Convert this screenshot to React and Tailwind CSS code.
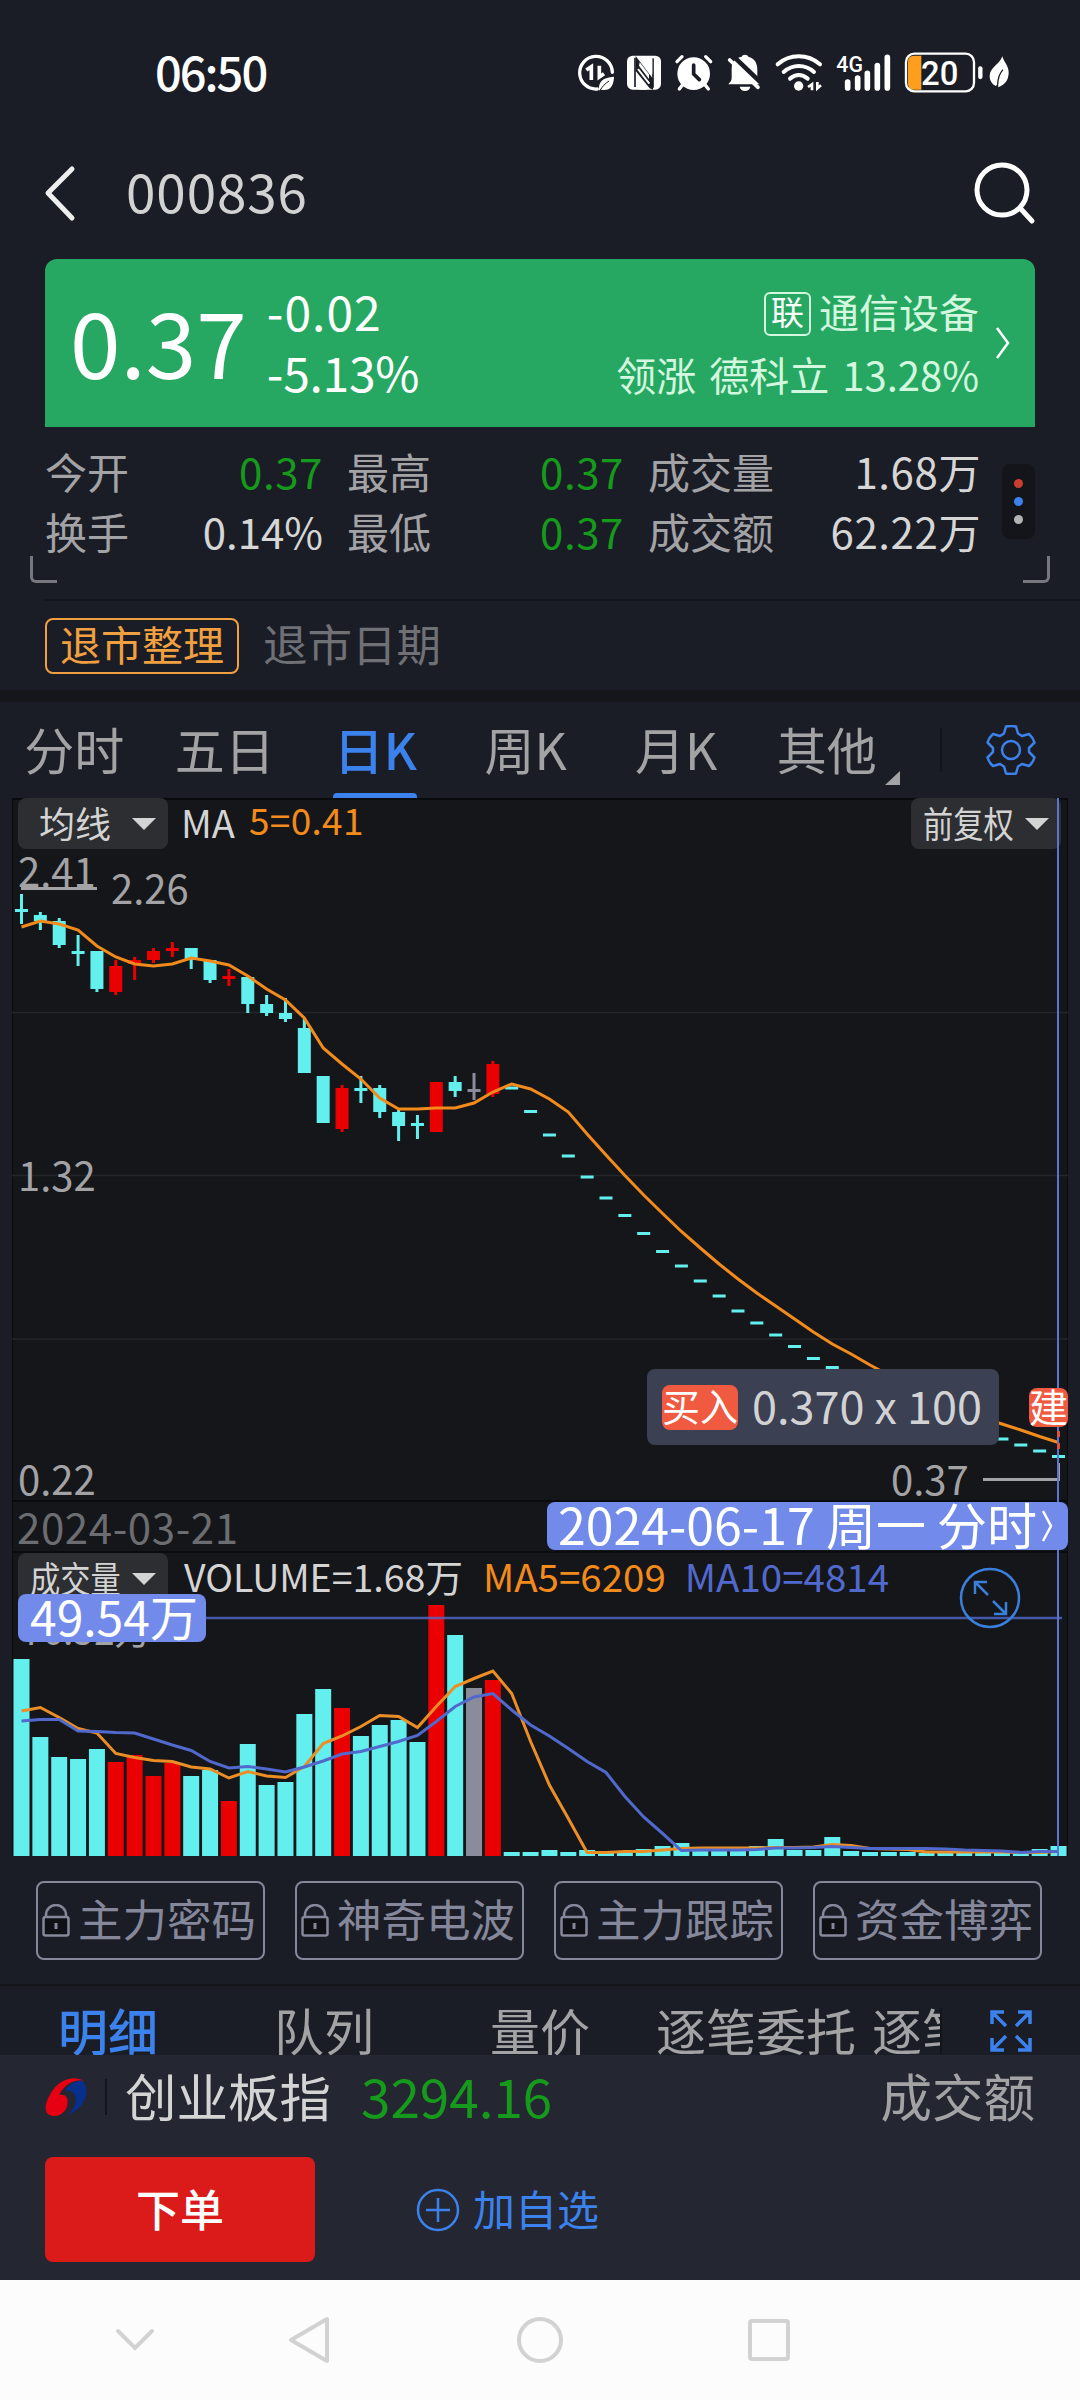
import React, { useState } from 'react';
import clsx from 'clsx';

const UP = '#ea0000';
const DOWN = '#63efee';
const FLAT = '#8a8c9b';

// horizontal geometry shared by both charts
const STEP = 18.855;
const X0 = 9.5;
const cx = (i) => X0 + i * STEP;

// [high, bodyTop, bodyBottom, low, color]
const candles = [
  [96, 111, 114, 126, DOWN], [114, 117, 123, 132, DOWN], [120, 123, 147, 150, DOWN],
  [137, 153, 156, 168, DOWN], [153, 153, 191, 194, DOWN], [162, 168, 194, 197, UP],
  [159, 162, 166, 182, UP], [150, 153, 162, 165, UP], [144, 150, 153, 159, UP],
  [150, 150, 162, 171, DOWN], [162, 162, 182, 185, DOWN], [171, 178, 181, 188, UP],
  [179, 179, 206, 215, DOWN], [197, 206, 215, 218, DOWN], [200, 215, 221, 224, DOWN],
  [221, 230, 275, 275, DOWN], [278, 278, 325, 325, DOWN], [287, 290, 331, 334, UP],
  [278, 290, 293, 305, DOWN], [287, 290, 314, 320, DOWN], [311, 314, 328, 343, DOWN],
  [317, 325, 328, 341, DOWN], [284, 284, 334, 334, UP], [278, 284, 293, 299, DOWN],
  [275, 291, 294, 302, FLAT], [263, 266, 296, 299, UP],
];

// limit-down days, one price per day
const limitDown = [
  290, 313.5, 337, 358, 379, 400, 417.5, 435.5, 453.5, 468, 483, 498, 513, 525, 537,
  548.5, 560.5, 569.5, 578, 587, 595, 602, 609, 616, 623, 630, 641, 647, 653, 658.5,
];

const ma5 = [
  129, 123, 126, 132, 148, 159, 166, 168, 166, 160, 163, 167, 178, 191, 202, 220, 250, 266,
  281, 300, 311, 311, 310, 310, 305, 294, 286, 291, 301, 314, 336, 357, 377.5, 397, 415.5,
  433.5, 450, 466, 481, 495, 508, 521, 534, 546, 556, 567, 577, 587, 597, 606, 614, 620,
  626, 632, 638.5, 644.5,
];

const volumes = [
  [197, DOWN], [119, DOWN], [99, DOWN], [97, DOWN], [107, DOWN], [94, UP], [101, UP],
  [80, UP], [93, UP], [80, DOWN], [86, DOWN], [55, UP], [112, DOWN], [71, DOWN], [74, DOWN],
  [142, DOWN], [167, DOWN], [148, UP], [120, DOWN], [131, DOWN], [136, DOWN], [114, DOWN],
  [251, UP], [221, DOWN], [168, FLAT], [176, UP], [4, DOWN], [4, DOWN], [6, DOWN], [4, DOWN],
  [6, DOWN], [5, DOWN], [5, DOWN], [7, DOWN], [10, DOWN], [13, DOWN], [6, DOWN], [6, DOWN],
  [6, DOWN], [10, DOWN], [17, DOWN], [6, DOWN], [6, DOWN], [19, DOWN], [5, DOWN], [4, DOWN],
  [4, DOWN], [4, DOWN], [3, DOWN], [3, DOWN], [3, DOWN], [3, DOWN], [3, DOWN], [3, DOWN],
  [7, DOWN], [10, DOWN],
];

const volMa5 = [
  158.5, 155, 165, 176, 180.5, 201, 205, 208, 209, 214.5, 216.5, 225.5, 219, 223.5, 225,
  214, 191, 183.5, 174, 163, 164, 175, 154, 134, 126, 118.5, 141, 189, 232.5, 266, 300, 300,
  299, 299, 297.5, 296, 295.5, 295.5, 295.5, 295.5, 295, 295, 294.5, 292, 293, 296, 296.5,
  297, 299.5, 299.5, 299.5, 299.5, 299.5, 300, 300, 299,
];

const volMa10 = [
  168.5, 167, 167, 178.5, 179, 180, 180.5, 186.5, 192.5, 198, 209, 215.5, 214, 216.5, 219.5,
  214.5, 208.5, 201.5, 199, 194, 189, 183, 169, 154, 144.5, 141, 157.5, 172.5, 183.5, 196,
  209, 220, 244, 264.5, 281, 298, 297.5, 297.5, 297.5, 297, 295.5, 295.5, 295, 294, 295,
  296, 296, 296, 296, 296.5, 297.5, 298, 298.5, 300, 299, 299,
];

const toPoints = (values) => values.map((y, i) => `${cx(i).toFixed(1)},${y}`).join(' ');

function StatusBar() {
  return (
    <div className="flex h-[146px] items-center justify-between pl-[155px] pr-[70px] text-white">
      <span className="-mt-1.5 text-[47px] leading-none font-medium tracking-[-2px]">06:50</span>
      <div className="flex items-center">
        {/* data saver */}
        <svg className="h-10 w-[38px]" viewBox="113 70 114 120" fill="none" stroke="white">
          <path d="M219 128a49 49 0 1 0-45 50" strokeWidth="10" strokeLinecap="round" />
          <path d="M141 121l15-10v40" strokeWidth="11" />
          <path d="M180 108v34l14-10" strokeWidth="11" />
          <path d="M179 183c-3-28 12-40 45-42-1 30-14 44-38 39z" fill="white" stroke="none" />
          <path d="M181 184c8-14 16-22 28-30" stroke="#1b1d26" strokeWidth="3" />
        </svg>
        {/* nfc */}
        <svg className="ml-[11px] h-10 w-[36px]" viewBox="264 70 108 120">
          <rect x="267" y="78" width="102" height="102" rx="17" fill="white" />
          <path d="M291 84v88M345 86v88" stroke="#1b1d26" strokeWidth="5" />
          <path d="M293 79l52 68v33l-10-4-42-52z" fill="#1b1d26" />
          <path d="M299 80l32 0v36zM303 108l30 40v-14l-28-36zM303 142v38h24z" fill="white" />
          <path d="M300 118l34 44M340 82v50" stroke="white" strokeWidth="6" />
        </svg>
        {/* alarm */}
        <svg className="ml-[12px] h-10 w-[40px]" viewBox="410 70 120 120" fill="none" stroke="white" strokeLinecap="round">
          <circle cx="469" cy="132" r="49" fill="white" stroke="none" />
          <path d="M419 96l15-15M520 96l-15-15" strokeWidth="10" />
          <path d="M436 165l-10 13M503 165l10 13" strokeWidth="10" />
          <path d="M469 106v27l17 17" stroke="#1b1d26" strokeWidth="11" />
        </svg>
        {/* muted bell */}
        <svg className="ml-[12px] h-10 w-[36px]" viewBox="566 70 108 120">
          <path d="M583 117c0-24 14-33 30-36 2-8 18-8 20 0 18 5 27 18 27 40v25l8 18h-95c5-6 10-10 10-18z" fill="white" />
          <path d="M607 171h32c-2 17-30 17-32 0z" fill="white" />
          <path d="M583 75l90 86" stroke="#1b1d26" strokeWidth="14" />
          <path d="M577 91l85 82" stroke="white" strokeWidth="11" strokeLinecap="round" />
        </svg>
        {/* wifi */}
        <svg className="ml-[12px] h-10 w-[50px]" viewBox="707 70 150 120" fill="none" stroke="white" strokeLinecap="round">
          <path d="M718 104c36-32 90-32 127 0M736 127c27-24 64-24 91 0M755 147c17-14 36-14 53 0" strokeWidth="12" />
          <circle cx="781" cy="169" r="14" fill="white" stroke="none" />
          <path d="M809 172l12-8v18M837 157v19l11-9" strokeWidth="8" strokeLinecap="butt" />
        </svg>
        {/* signal */}
        <svg className="ml-[12px] h-10 w-[56px] overflow-visible" viewBox="892 70 168 120">
          <text x="893" y="128" fontSize="68" fontWeight="500" fill="white" textLength="80" lengthAdjust="spacingAndGlyphs" style={{ fontFamily: 'Roboto' }}>4G</text>
          <path d="M927 157v18M957 145v30M986 131v44M1016 108v67M1046 83v92" stroke="white" strokeWidth="17" strokeLinecap="round" />
        </svg>
        {/* battery */}
        <svg className="ml-[12px] h-10 w-[80px] overflow-visible" viewBox="1095 70 240 120">
          <path d="M1147 78h-22q-18 0-18 18v66q0 18 18 18h22z" fill="#ff9d1c" />
          <rect x="1101" y="72" width="204" height="113" rx="25" fill="none" stroke="white" strokeWidth="7" />
          <path d="M1324 116v26" stroke="white" strokeWidth="13" strokeLinecap="round" />
          <text x="1146" y="165" fontSize="102" fontWeight="500" fill="white" textLength="112" lengthAdjust="spacingAndGlyphs" style={{ fontFamily: 'Roboto' }}>20</text>
        </svg>
        <svg className="ml-[4px] h-10 w-[22px]" viewBox="1347 70 66 120">
          <path d="M1390 80c4 16 19 28 19 48 0 24-12 38-31 45l-1-13-6 9c-12-5-19-16-19-30 0-26 29-33 38-59z" fill="white" />
          <path d="M1376 164c1-22 5-32 16-44" stroke="#1b1d26" strokeWidth="4" fill="none" />
        </svg>
      </div>
    </div>
  );
}

function Header() {
  return (
    <div className="flex h-[113px] items-start justify-between pl-[43px] pr-[43px] pt-[16px]">
      <div className="flex items-center">
        <svg className="h-[60px] w-[36px]" viewBox="0 0 36 60" fill="none" stroke="#eeeeee" strokeWidth="5" strokeLinecap="round" strokeLinejoin="round">
          <path d="M29 7L5 31l24 25" />
        </svg>
        <span className="ml-[47px] pb-[3px] text-[53px] leading-none tracking-[0.9px] text-[#d2d2d2]">000836</span>
      </div>
      <svg className="h-[64px] w-[66px]" viewBox="0 0 66 64" fill="none" stroke="white" strokeWidth="5" strokeLinecap="round">
        <circle cx="31" cy="28" r="25" />
        <path d="M49 46l12 13" />
      </svg>
    </div>
  );
}

function QuoteCard() {
  return (
    <div className="mx-[45px] flex h-[168px] items-center rounded-t-xl bg-[#27a862] pl-[25px] pr-[23px] text-white">
      <span className="pb-[8px] text-[91px] leading-none">0.37</span>
      <div className="ml-[20px] flex flex-col gap-[13px] pb-[6px] text-[48px] leading-none">
        <span className="tracking-[1px]">-0.02</span>
        <span className="tracking-[-0.3px]">-5.13%</span>
      </div>
      <div className="ml-auto flex flex-col items-end gap-[18px] pb-[6px] text-[40px] leading-none text-[#d3f7df]">
        <div className="flex items-center">
          <span className="mr-[8px] mt-[5px] flex h-[44px] w-[47px] items-center justify-center rounded-md border-2 border-[#d3f7df] pb-1 text-[33px] text-white">联</span>
          <span>通信设备</span>
        </div>
        <span className="whitespace-pre [word-spacing:4px]">领涨 德科立 13.28%</span>
      </div>
      <svg className="ml-[15px] h-[34px] w-[18px]" viewBox="0 0 18 34" fill="none" stroke="white" strokeWidth="2.5">
        <path d="M3 2l11 15L3 32" />
      </svg>
    </div>
  );
}

const stats = [
  { label: '今开', value: '0.37', green: true },
  { label: '最高', value: '0.37', green: true },
  { label: '成交量', value: '1.68万' },
  { label: '换手', value: '0.14%' },
  { label: '最低', value: '0.37', green: true },
  { label: '成交额', value: '62.22万' },
];

function Stats() {
  return (
    <div className="relative h-[172px] pl-[45px] pr-[45px] pt-[14px]">
      <div className="flex">
        <div className="grid w-[937px] grid-cols-[278px_277px_333px] gap-x-[24px] text-[42px] leading-[60px]">
          {stats.map((s) => (
            <div key={s.label} className="flex justify-between">
              <span className="text-[#a3a3a6]">{s.label}</span>
              <span className={clsx(s.green ? 'tracking-[0.6px] text-[#159a1b]' : 'text-[#d6d6d6]', s.value.endsWith('万') && 'tracking-[0.6px]')}>
                {s.value}
              </span>
            </div>
          ))}
        </div>
        <div className="ml-[20px] mt-[23px] flex h-[75px] w-[33px] flex-col items-center justify-center gap-[9px] rounded-lg bg-[#14151a]">
          <span className="size-[9px] rounded-full bg-[#c9402f]" />
          <span className="size-[9px] rounded-full bg-[#3b82ec]" />
          <span className="size-[9px] rounded-full bg-[#b3b3b3]" />
        </div>
      </div>
      <span className="absolute left-[30px] top-[129px] h-[27px] w-[27px] rounded-bl-md border-b-3 border-l-3 border-[#77787d]" />
      <span className="absolute right-[30px] top-[129px] h-[27px] w-[27px] rounded-br-md border-b-3 border-r-3 border-[#77787d]" />
    </div>
  );
}

const periods = ['分时', '五日', '日K', '周K', '月K', '其他'];

function PeriodTabs() {
  const [active, setActive] = useState('日K');
  return (
    <div className="flex h-24 items-center">
      {periods.map((p) => (
        <button
          key={p}
          onClick={() => setActive(p)}
          className={clsx(
            'relative flex h-full w-[150.5px] items-center justify-center pr-[2px] pb-[5px] text-[50px] leading-none',
            p === active ? 'font-medium text-[#3b82ec]' : 'text-[#a3a3a6]'
          )}
        >
          {p}
          {p === active && <span className="absolute bottom-0 left-[32px] h-[5px] w-[84px] rounded-t bg-[#3b82ec]" />}
          {p === '其他' && (
            <svg className="absolute bottom-[13px] right-[3px] h-[14px] w-[15px]" viewBox="0 0 15 14">
              <path d="M15 0v14H0z" fill="#a3a3a6" />
            </svg>
          )}
        </button>
      ))}
      <span className="ml-[37px] h-[44px] w-[2px] bg-[#14151a]" />
      <svg className="ml-[44px] h-[50px] w-[50px]" viewBox="-25 -25 50 50" fill="none" stroke="#3b82ec" strokeWidth="2.5" strokeLinejoin="round">
        <path d="M-5-23.500Q0-24.500 5-23.500L7-16.500L11-14L18-16Q22-12.500 23.500-7.500L18-2V2L23.500 7.500Q22 12.500 18 16L11 14L7 16.500L5 23.500Q0 24.500-5 23.500L-7 16.500L-11 14L-18 16Q-22 12.500-23.500 7.500L-18 2V-2L-23.500-7.500Q-22-12.500-18-16L-11-14L-7-16.500Z" />
        <circle r="9" />
      </svg>
    </div>
  );
}

function Picker({ children, narrow }) {
  return (
    <div className="flex h-[51px] w-[150px] items-center justify-between rounded-lg bg-[#2d2e32] pr-[12px] text-[36px] leading-none text-[#d4d4d4]">
      <span className={clsx('origin-left pb-1 whitespace-nowrap', narrow ? 'ml-[12px] w-[90px] scale-x-[0.84]' : 'ml-[21px]')}>
        {children}
      </span>
      <svg className="h-3 w-6" viewBox="0 0 24 12">
        <path d="M0 0h24L12 12z" fill="#d4d4d4" />
      </svg>
    </div>
  );
}

function PriceChart() {
  return (
    <div className="relative h-[704px] border-y-2 border-[#0a0b0e]">
      <svg className="absolute -top-[2px] left-0 h-[704px] w-[1056px] overflow-visible" viewBox="0 0 1056 704">
        <path d="M0 214.500h1056M0 377.500h1056M0 541h1056" stroke="#23252a" strokeWidth="1.500" />
        {candles.map(([high, top, bottom, low, color], i) => (
          <g key={i} fill={color}>
            <rect x={cx(i) - 1.5} y={high} width="3" height={low - high} />
            <rect x={cx(i) - 6.5} y={top} width="13" height={bottom - top} />
          </g>
        ))}
        {limitDown.map((y, i) => (
          <rect key={i} x={cx(i + 26) - 6.5} y={y - 1.5} width="13" height="3" fill={DOWN} />
        ))}
        <polyline points={toPoints(ma5)} fill="none" stroke="#f28a1c" strokeWidth="3" />
        <g fill="#a3a3a6" fontSize="40">
          <text x="6" y="89">2.41</text>
          <text x="99" y="106">2.26</text>
          <text x="6" y="393">1.32</text>
          <text x="6" y="697">0.22</text>
          <text x="879" y="697">0.37</text>
          <rect x="9" y="89" width="76" height="3" />
          <rect x="971" y="680" width="75" height="3" />
          <rect x="1045" y="665" width="3" height="18" />
        </g>
      </svg>
      <div className="relative -mt-[2px] flex items-center pl-[6px] pr-[7px]">
        <Picker>均线</Picker>
        <span className="ml-[13px] pb-1 text-[38px] leading-none text-[#d4d4d4]">MA</span>
        <span className="ml-[14px] pb-2 text-[37px] leading-none tracking-[0.3px] text-[#f28a1c]">5=0.41</span>
        <div className="ml-auto">
          <Picker narrow>前复权</Picker>
        </div>
      </div>
    </div>
  );
}

function TradeTip() {
  return (
    <>
      <div className="absolute left-[635px] top-[571px] flex h-[76px] w-[352px] items-center rounded-lg bg-[#3b4053] pl-[15px]">
        <span className="flex h-[45px] w-[76px] items-center justify-center rounded-lg bg-[#ef5a41] pb-1 text-[38px] leading-none whitespace-nowrap text-white">买入</span>
        <span className="ml-[14px] pb-1.5 text-[45px] leading-none whitespace-nowrap text-[#d2d2d4]">0.370 x 100</span>
      </div>
      <svg className="absolute left-[1045px] top-[629px] h-[28px] w-[3px]" viewBox="0 0 3 28">
        <path d="M1.500 4v24" stroke="#e0503f" strokeWidth="3" strokeDasharray="6 6" />
      </svg>
      <span className="absolute left-[1017px] top-[590px] flex h-[39px] w-[39px] items-center justify-center rounded-lg bg-[#ef5a41] pb-1 text-[39px] leading-none text-white">建</span>
    </>
  );
}

function DateStrip() {
  return (
    <div className="flex h-[51px] items-start justify-between border-b-2 border-[#0a0b0e] text-[#6c6d71]">
      <span className="ml-[5px] mt-[3px] text-[42px] leading-[42px] tracking-[0.6px]">2024-03-21</span>
      <div className="relative z-10 flex h-[48px] w-[521px] items-center rounded-lg bg-[#728bea] pl-[11px] text-white">
        <span className="pb-1.5 text-[50px] leading-none whitespace-pre">2024-06-17 周一 分时</span>
        <svg className="ml-[4px] h-[34px] w-[14px] shrink-0" viewBox="0 0 14 34" fill="none" stroke="white" strokeWidth="2.5">
          <path d="M2 2l8 15-8 15" />
        </svg>
      </div>
    </div>
  );
}

function VolumeChart() {
  return (
    <div className="relative h-[303px]">
      <svg className="absolute left-0 top-0 h-[303px] w-[1056px]" viewBox="0 0 1056 303">
        <text x="10" y="92" fontSize="37" fill="#a3a3a6">76.52万</text>
        {volumes.map(([h, color], i) => (
          <rect key={i} x={cx(i) - 8} y={303 - h} width="16" height={h} fill={color} />
        ))}
        <g transform="translate(0 -0.500)" fill="none" strokeWidth="3">
          <polyline points={toPoints(volMa5)} stroke="#ec8e26" />
          <polyline points={toPoints(volMa10)} stroke="#5169cc" />
        </g>
        <path d="M188 65h862" stroke="#5169cc" strokeOpacity="0.800" strokeWidth="2.500" />
        <g fill="none" stroke="#3b7fdc" strokeWidth="2.500">
          <circle cx="978" cy="45" r="29" />
          <path d="M976 42l-13-13M963 41V29h12M981 48l13 13M994 49v12h-12" />
        </g>
      </svg>
      <div className="relative flex items-center pl-[6px] text-[38px] leading-none">
        <Picker narrow>成交量</Picker>
        <span className="ml-[16px] pb-1.5 text-[37.5px] text-[#d4d4d4]">VOLUME=1.68万</span>
        <span className="ml-[20px] pb-1.5 text-[38.5px] text-[#f28a1c]">MA5=6209</span>
        <span className="ml-[19px] pb-1.5 text-[38.5px] text-[#5169cc]">MA10=4814</span>
      </div>
      <div className="absolute left-[6px] top-[41px] flex h-[48px] w-[188px] items-center rounded-lg bg-[#728bea] pb-1.5 pl-[12px] text-[48px] leading-none whitespace-nowrap text-white">49.54万</div>
    </div>
  );
}

function FeatureButtons() {
  return (
    <div className="flex h-[130px] gap-[30px] border-b-2 border-[#14151a] px-[36px] pt-[25px]">
      {['主力密码', '神奇电波', '主力跟踪', '资金博弈'].map((name) => (
        <button key={name} className="flex h-[79px] w-[229px] items-center rounded-lg border-2 border-[#85879a] pl-[4px] text-[44.5px] leading-none text-[#85879a]">
          <svg className="h-[33px] w-[28px] shrink-0" viewBox="0 0 28 33" fill="none" stroke="#85879a" strokeWidth="2.500">
            <path d="M4 13V11a10 10 0 0 1 20 0v2" />
            <rect x="1.500" y="13" width="25" height="18.500" rx="2" fill="#101116" />
            <path d="M14 19v6" strokeWidth="3" />
          </svg>
          <span className="ml-[8px] pb-1 whitespace-nowrap">{name}</span>
        </button>
      ))}
    </div>
  );
}

function DetailTabs() {
  return (
    <div className="flex h-[69px] overflow-hidden">
      <div className="flex w-[940px] overflow-hidden">
        {['明细', '队列', '量价', '逐笔委托', '逐笔成交'].map((name, i) => (
          <span key={name} className={clsx('w-[216px] shrink-0 pt-[18px] text-center text-[50px] leading-[50px] whitespace-nowrap', i === 0 ? 'font-medium text-[#3b82ec]' : 'text-[#a3a3a6]')}>
            {name}
          </span>
        ))}
      </div>
      <span className="mt-[22px] h-[46px] w-[2px] bg-[#14151a]" />
      <svg className="ml-[48px] mt-[24px] h-[42px] w-[42px]" viewBox="0 0 42 42" fill="none" stroke="#3b82ec" strokeWidth="3.500">
        <path d="M2 14V2h12M2 2l14 14M28 2h12v12M40 2L26 16M2 28v12h12M2 40l14-14M28 40h12V28M40 40L26 26" />
      </svg>
    </div>
  );
}

function BottomPanel() {
  return (
    <div className="h-[225px] bg-[#242631] px-[45px]">
      <div className="flex h-[84px] items-center text-[51.5px] leading-none">
        <svg className="h-[42px] w-[42px]" viewBox="0 0 42 42">
          <path d="M39 5C29-1 14 3 6 17c-7 11-8 22 2 23 10 1 17-9 14-18-1-3-4-4-8-3C20 8 29 3 39 5z" fill="#e60012" />
          <path d="M38 5c7 9 4 26-15 34 8-8 9-14 7-20-2-4-6-5-10-4 4-7 11-11 18-10z" fill="#06308c" />
        </svg>
        <span className="ml-[18px] h-[36px] w-[2px] bg-[#14151a]" />
        <span className="ml-[18px] pb-1 text-[#d4d4d4]">创业板指</span>
        <span className="ml-[30px] pb-1 text-[53px] text-[#159a1b]">3294.16</span>
        <span className="ml-auto pb-1 text-[#a3a3a6]">成交额</span>
      </div>
      <div className="mt-[18px] flex items-center">
        <button className="h-[105px] w-[270px] rounded-lg bg-[#db1a1a] pb-1 text-[44px] leading-none font-medium text-white">下单</button>
        <button className="ml-[101px] flex items-center text-[42px] leading-none text-[#3b82ec]">
          <svg className="h-[44px] w-[44px]" viewBox="-22 -22 44 44" fill="none" stroke="#3b82ec" strokeWidth="2.500">
            <circle r="20" />
            <path d="M-12 0h24M0-12v24" />
          </svg>
          <span className="ml-[13px] pb-1">加自选</span>
        </button>
      </div>
    </div>
  );
}

function NavBar() {
  return (
    <div className="flex h-[120px] items-center bg-[#fcfcfc] pl-[114px]">
      <svg className="h-[26px] w-[42px]" viewBox="0 0 42 26" fill="none" stroke="#d2d2d2" strokeWidth="4" strokeLinecap="round">
        <path d="M4 4l17 17L38 4" />
      </svg>
      <svg className="ml-[130px] h-[50px] w-[46px]" viewBox="0 0 46 50" fill="none" stroke="#d2d2d2" strokeWidth="4" strokeLinejoin="round">
        <path d="M41 4v42L5 25z" />
      </svg>
      <span className="ml-[185px] size-[46px] rounded-full border-4 border-[#d2d2d2]" />
      <span className="ml-[185px] size-[42px] rounded border-4 border-[#d2d2d2]" />
    </div>
  );
}

export default function App() {
  return (
    <div className="h-[2400px] w-[1080px] overflow-hidden bg-[#1b1d26] font-['Noto_Sans_CJK_SC',sans-serif]">
      <StatusBar />
      <Header />
      <QuoteCard />
      <Stats />
      <div className="ml-[45px] h-[2px] bg-[#14151a]" />
      <div className="flex h-[89px] items-center pl-[45px] leading-none">
        <span className="flex h-[56px] w-[194px] items-center justify-center rounded-lg border-2 border-[#f0a040] pb-1 text-[41px] text-[#f0a040]">退市整理</span>
        <span className="ml-[24px] pb-[5px] text-[44.5px] text-[#707176]">退市日期</span>
      </div>
      <div className="h-3 bg-[#15161a]" />
      <PeriodTabs />
      <div className="relative mx-3 bg-[#15161a] shadow-[inset_1px_0_#0a0b0e,inset_-1px_0_#0a0b0e]">
        <PriceChart />
        <DateStrip />
        <VolumeChart />
        <span className="absolute left-[1045px] top-0 h-full w-[2px] bg-[#5a75d0]" />
        <TradeTip />
      </div>
      <FeatureButtons />
      <DetailTabs />
      <BottomPanel />
      <NavBar />
    </div>
  );
}
